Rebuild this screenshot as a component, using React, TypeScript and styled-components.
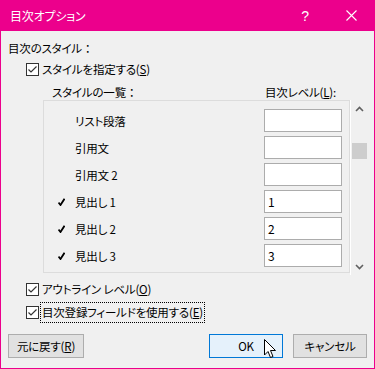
import React from "react";
import styled, { createGlobalStyle } from "styled-components";

const GlobalStyle = createGlobalStyle`
  body {
    margin: 0;
    background: #ffffff;
  }
`;

const Window = styled.div`
  position: relative;
  width: 375px;
  height: 369px;
  box-sizing: border-box;
  border: 1px solid #ec008c;
  border-top: none;
  background: #f0f0f0;
  display: flex;
  flex-direction: column;
  font-family: "Noto Sans CJK JP", sans-serif;
  font-feature-settings: "palt";
  font-size: 11.5px;
  letter-spacing: -0.2px;
  color: #000;
`;

const TitleBar = styled.div`
  height: 31px;
  background: #ec008c;
  color: #fff;
  display: flex;
  align-items: center;
  padding-left: 9px;
`;

const TitleText = styled.span`
  flex: 1;
  line-height: 16px;
  font-size: 12px;
`;

const TitleButton = styled.div`
  width: 46px;
  height: 31px;
  display: flex;
  align-items: center;
  justify-content: center;
  font-family: "Liberation Sans", sans-serif;
  font-size: 14px;
`;

const Body = styled.div`
  flex: 1;
  display: flex;
  flex-direction: column;
  padding: 0 7px;
`;

const SectionLabel = styled.div`
  margin-top: 9px;
  height: 16px;
  line-height: 16px;
`;

const Colon = styled.span`
  font-feature-settings: normal;
`;

const CheckRow = styled.div<{ $top: number; $height?: number }>`
  display: flex;
  align-items: center;
  gap: 3px;
  margin-top: ${({ $top }) => $top}px;
  height: ${({ $height = 16 }) => $height}px;
  padding-left: 18px;
  line-height: 16px;
`;

const FocusLabel = styled.span`
  border: 1px dotted #000;
  padding: 1px 1px 2px 1px;
  margin-left: -2px;
`;

const HeaderRow = styled.div`
  display: grid;
  grid-template-columns: 213px auto;
  margin-top: 8px;
  height: 15px;
  line-height: 15px;
  padding-left: 44px;
`;

const ListArea = styled.div`
  display: flex;
  align-items: flex-start;
  margin-left: 35px;
`;

const ListBox = styled.div`
  width: 307px;
  height: 173px;
  box-sizing: border-box;
  border: 1px solid #dcdcdc;
  padding-top: 6px;
  display: flex;
  flex-direction: column;
`;

const ListRow = styled.div`
  height: 27px;
  display: grid;
  grid-template-columns: 31px 189px 78px;
  align-items: center;
`;

const Mark = styled.div`
  display: flex;
  justify-content: flex-end;
  padding-right: 10px;
`;

const LevelBox = styled.div`
  width: 78px;
  height: 23px;
  box-sizing: border-box;
  border: 1px solid #acacac;
  background: #fff;
  padding-left: 3px;
  line-height: 21px;
  font-size: 12px;
`;

const Scrollbar = styled.div`
  width: 17px;
  height: 175px;
  box-sizing: border-box;
  border-left: 1px solid #fff;
  display: flex;
  flex-direction: column;
`;

const ScrollArrow = styled.div`
  height: 17px;
  display: flex;
  align-items: center;
  justify-content: center;
`;

const ScrollTrack = styled.div`
  flex: 1;
  padding-top: 26px;
  display: flex;
  flex-direction: column;
  align-items: center;
`;

const Thumb = styled.div`
  width: 15px;
  height: 16px;
  background: #cdcdcd;
`;

const ButtonRow = styled.div`
  display: flex;
  margin-top: 11px;
`;

const Button = styled.div<{ $width: number; $primary?: boolean; $gap?: number }>`
  width: ${({ $width }) => $width}px;
  height: 24px;
  margin-left: ${({ $gap = 0 }) => $gap}px;
  box-sizing: border-box;
  border: 1px solid ${({ $primary }) => ($primary ? "#0078d7" : "#adadad")};
  background: ${({ $primary }) => ($primary ? "#e5f1fb" : "#e1e1e1")};
  display: flex;
  align-items: center;
  justify-content: center;
  line-height: 16px;
`;

const Spacer = styled.div`
  flex: 1;
`;

const Cursor = styled.svg`
  position: absolute;
  left: 262px;
  top: 338px;
`;

const CheckBox: React.FC = () => (
  <svg width="13" height="13" viewBox="0 0 13 13">
    <rect x="0.5" y="0.5" width="12" height="12" fill="#fff" stroke="#333" />
    <polyline points="2.5,6.5 5,9 10.5,3.5" fill="none" stroke="#333" strokeWidth="1.2" />
  </svg>
);

const Tick: React.FC = () => (
  <svg width="7" height="8" viewBox="0 0 7 8">
    <path d="M0.5 4.5 L2.5 7 L6.5 0.8" fill="none" stroke="#000" strokeWidth="1.8" />
  </svg>
);

const Chevron: React.FC<{ down?: boolean }> = ({ down }) => (
  <svg width="9" height="6" viewBox="0 0 9 6">
    <polyline
      points={down ? "1,1 4.5,4.5 8,1" : "1,5 4.5,1.5 8,5"}
      fill="none"
      stroke="#606060"
      strokeWidth="1.6"
    />
  </svg>
);

const rows = [
  { name: "リスト段落", level: "", checked: false },
  { name: "引用文", level: "", checked: false },
  { name: "引用文 2", level: "", checked: false },
  { name: "見出し 1", level: "1", checked: true },
  { name: "見出し 2", level: "2", checked: true },
  { name: "見出し 3", level: "3", checked: true },
];

const App: React.FC = () => {
  return (
    <>
      <GlobalStyle />
      <Window>
        <TitleBar>
          <TitleText>目次オプション</TitleText>
          <TitleButton>?</TitleButton>
          <TitleButton>
            <svg width="11" height="11" viewBox="0 0 11 11">
              <path d="M0.5 0.5 L10.5 10.5 M10.5 0.5 L0.5 10.5" stroke="#fff" strokeWidth="1.1" />
            </svg>
          </TitleButton>
        </TitleBar>
        <Body>
          <SectionLabel>
            目次のスタイル<Colon>：</Colon>
          </SectionLabel>
          <CheckRow $top={5}>
            <CheckBox />
            <span>
              スタイルを指定する(<u>S</u>)
            </span>
          </CheckRow>
          <HeaderRow>
            <span>
              スタイルの一覧<Colon>：</Colon>
            </span>
            <span>
              目次レベル(<u>L</u>):
            </span>
          </HeaderRow>
          <ListArea>
            <ListBox>
              {rows.map((r) => (
                <ListRow key={r.name}>
                  <Mark>{r.checked && <Tick />}</Mark>
                  <span>{r.name}</span>
                  <LevelBox>{r.level}</LevelBox>
                </ListRow>
              ))}
            </ListBox>
            <Scrollbar>
              <ScrollArrow>
                <Chevron />
              </ScrollArrow>
              <ScrollTrack>
                <Thumb />
              </ScrollTrack>
              <ScrollArrow>
                <Chevron down />
              </ScrollArrow>
            </Scrollbar>
          </ListArea>
          <CheckRow $top={6}>
            <CheckBox />
            <span>
              アウトライン レベル(<u>O</u>)
            </span>
          </CheckRow>
          <CheckRow $top={5} $height={21}>
            <CheckBox />
            <FocusLabel>
              目次登録フィールドを使用する(<u>E</u>)
            </FocusLabel>
          </CheckRow>
          <ButtonRow>
            <Button $width={76}>
              <span>
                元に戻す(<u>R</u>)
              </span>
            </Button>
            <Spacer />
            <Button $width={74} $primary>
              OK
            </Button>
            <Button $width={74} $gap={10}>
              キャンセル
            </Button>
          </ButtonRow>
        </Body>
        <Cursor width="14" height="21" viewBox="0 0 14 21">
          <path
            d="M1.5 1.5 L1.5 17 L5 13.5 L7.5 19.5 L10 18.5 L7.5 12.5 L12.5 12.5 Z"
            fill="#fff"
            stroke="#000"
            strokeWidth="1"
          />
        </Cursor>
      </Window>
    </>
  );
};

export default App;
